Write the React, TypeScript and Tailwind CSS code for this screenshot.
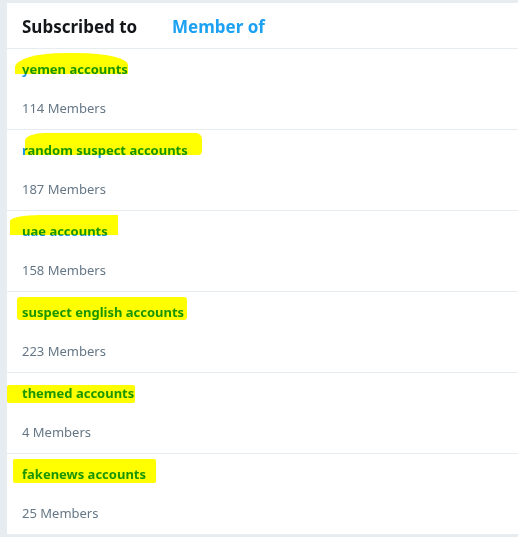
const lists = [
  { name: "yemen accounts", members: 114, hl: "left-[8px] top-[4px] w-[113px] h-[21px] rounded-tl-[50px_14px] rounded-tr-[50px_12px]" },
  { name: "random suspect accounts", members: 187, hl: "left-[18px] top-[3px] w-[177px] h-[22px] rounded-tl-[20px_8px] rounded-tr-[6px] rounded-br-[4px]" },
  { name: "uae accounts", members: 158, hl: "left-[3px] top-[4px] w-[108px] h-[20px] rounded-tl-[30px_6px]" },
  { name: "suspect english accounts", members: 223, hl: "left-[10px] top-[5px] w-[170px] h-[23px] rounded-[3px]" },
  { name: "themed accounts", members: 4, hl: "left-[0px] top-[12px] w-[128px] h-[18px] rounded-[2px]" },
  { name: "fakenews accounts", members: 25, hl: "left-[6px] top-[5px] w-[143px] h-[24px] rounded-[2px]" },
]

export default function App() {
  return (
    <div className="w-[518px] h-[537px] bg-[#e6ecf0] pl-[7px] pt-[3px] overflow-hidden font-['Noto_Sans',sans-serif]">
      <div className="bg-white">
        {/* Tabs */}
        <div className="h-[46px] flex items-center px-[15px] pt-[2px] border-b border-[#e6ecf0]">
          <span className="text-[17px] font-bold text-[#14171a] w-[150px]">Subscribed to</span>
          <span className="text-[17px] font-bold text-[#1da1f2]">Member of</span>
        </div>

        {lists.map((l) => (
          <div key={l.name} className="relative h-[81px] border-b border-[#e6ecf0] px-[15px] pt-[12px]">
            <div className="text-[13px] leading-[16px] font-bold text-[#1b95e0]">{l.name}</div>
            <div className="mt-[23px] text-[13px] leading-[16px] text-[#657786]">{l.members} Members</div>
            {/* marker highlight */}
            <span className={"absolute bg-[#ffff00] mix-blend-multiply " + l.hl} />
          </div>
        ))}
      </div>
    </div>
  )
}
